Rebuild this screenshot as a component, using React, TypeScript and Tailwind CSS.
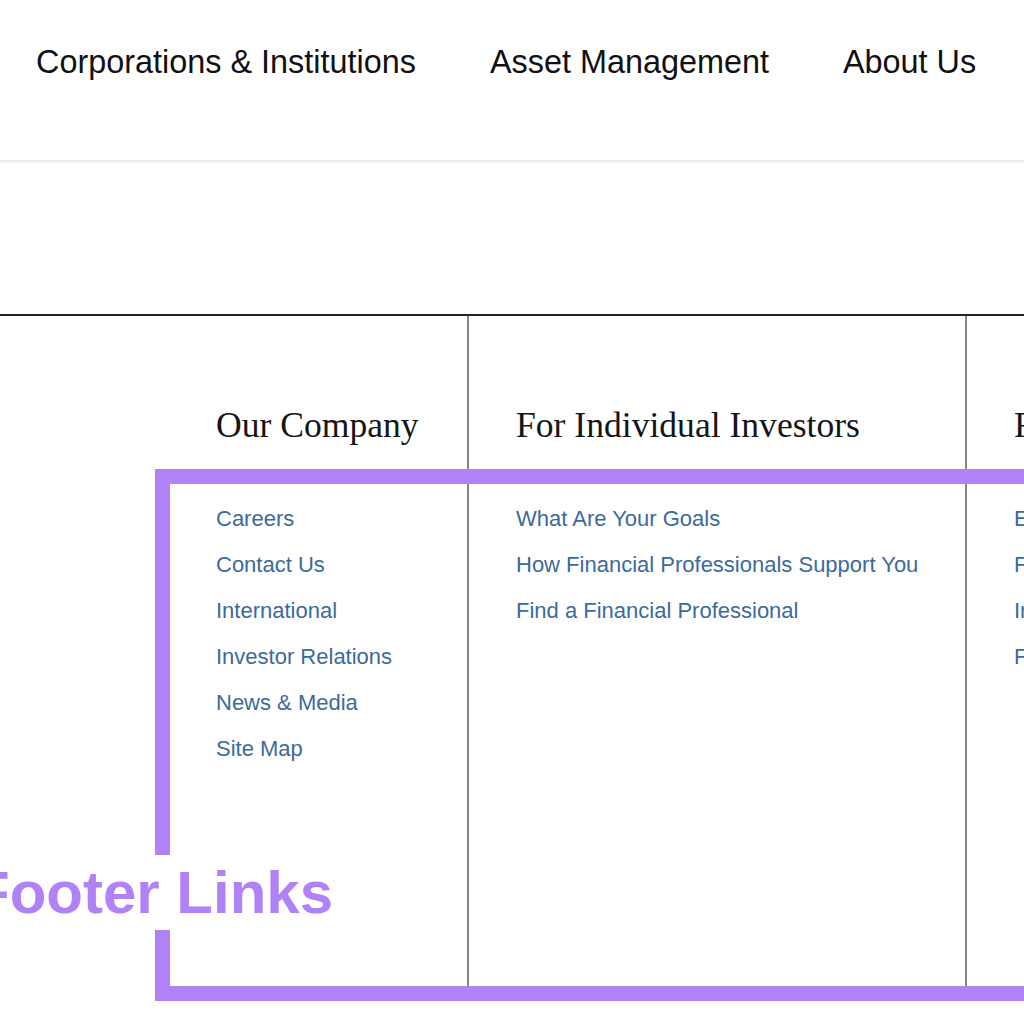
import React from 'react';

const navItems = ['Corporations & Institutions', 'Asset Management', 'About Us'];

const columns = [
  {
    title: 'Our Company',
    links: ['Careers', 'Contact Us', 'International', 'Investor Relations', 'News & Media', 'Site Map'],
    className: 'w-[469px] pl-[216px] border-r-2',
  },
  {
    title: 'For Individual Investors',
    links: ['What Are Your Goals', 'How Financial Professionals Support You', 'Find a Financial Professional'],
    className: 'w-[498px] pl-[47px] border-r-2',
  },
  {
    title: 'For Financial Professionals',
    links: ['Events & Education', 'Fund Performance', 'Insights', 'Forms & Literature'],
    className: 'w-[500px] pl-[47px]',
  },
];

export default function App() {
  return (
    <div className="relative h-[1024px] w-[1024px] overflow-hidden bg-white">
      {/* Top navigation */}
      <header className="h-[162px] border-b-2 border-[#ededed] shadow-[0_1px_2px_rgba(0,0,0,0.04)]">
        <nav className="flex gap-[74px] whitespace-nowrap pl-[36px] pt-[47px] font-['Liberation_Sans',Arial,sans-serif] text-[32.4px] leading-[30px] text-[#111]">
          {navItems.map((item) => (
            <a key={item} href="#">
              {item}
            </a>
          ))}
        </nav>
      </header>

      {/* Footer */}
      <footer className="mt-[152px] border-t-2 border-[#222]">
        <div className="flex whitespace-nowrap">
          {columns.map((col) => (
            <div key={col.title} className={`h-[670px] shrink-0 border-[#858585] pt-[89px] ${col.className}`}>
              <h3 className="font-['Liberation_Serif','Times_New_Roman',serif] text-[35.6px] leading-[40px] text-[#151515]">
                {col.title}
              </h3>
              <ul className="mt-[51px] font-['Liberation_Sans',Arial,sans-serif] text-[22px] leading-[46px] text-[#3c6a9d]">
                {col.links.map((link) => (
                  <li key={link}>
                    <a href="#">{link}</a>
                  </li>
                ))}
              </ul>
            </div>
          ))}
        </div>
      </footer>

      {/* Annotation overlay */}
      <div className="pointer-events-none absolute left-[155px] top-[469px] h-[532px] w-[1000px] border-[15px] border-[#b181f6]" />
      <div className="absolute left-[-27px] top-[855px] bg-white pr-[4px] font-['Liberation_Sans',Arial,sans-serif] text-[60px] font-bold leading-[75px] text-[#b181f6]">
        Footer Links
      </div>
    </div>
  );
}
